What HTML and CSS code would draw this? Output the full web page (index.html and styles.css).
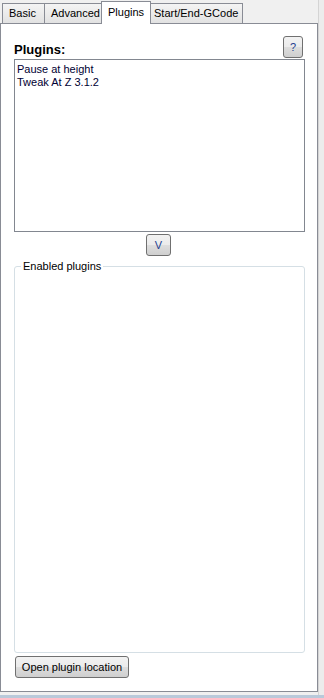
FILE: index.html
```html
<!DOCTYPE html>
<html lang="en">
  <head>
    <meta charset="UTF-8" />
    <meta name="viewport" content="width=device-width, initial-scale=1.0" />
    <title>Plugins</title>
    <link rel="stylesheet" href="styles.css">
  </head>
  <body>
    <div class="window">
      <div class="notebook">
        <div class="tabs">
          <span class="tab basic">Basic</span>
          <span class="tab advanced">Advanced</span>
          <span class="tab active">Plugins</span>
          <span class="tab gcode">Start/End-GCode</span>
        </div>
        <div class="panel">
          <div class="head">
            <span class="title">Plugins:</span>
            <button class="btn small">?</button>
          </div>
          <ul class="list">
            <li>Pause at height</li>
            <li>Tweak At Z 3.1.2</li>
          </ul>
          <div class="center">
            <button class="btn small down">V</button>
          </div>
          <fieldset class="group">
            <legend>Enabled plugins</legend>
          </fieldset>
          <div class="foot">
            <button class="btn open">Open plugin location</button>
          </div>
        </div>
      </div>
      <div class="side"></div>
    </div>
  </body>
</html>
```

FILE: styles.css
```css
* {
  margin: 0;
  padding: 0;
  box-sizing: border-box;
}

body {
  font-family: "Liberation Sans", Arial, sans-serif;
  font-size: 11px;
  color: #000;
  background-color: #f0f0f0;
  width: 324px;
  height: 698px;
  overflow: hidden;
}

.window {
  display: flex;
  height: 698px;
  border-bottom: 3px solid #b9c9da;
}

.notebook {
  width: 318px;
  display: flex;
  flex-direction: column;
}

.tabs {
  display: flex;
  align-items: flex-end;
  height: 23px;
  padding-left: 2px;
  background: #f0f0f0;
}

.tab {
  height: 20px;
  padding: 0 0 0 6px;
  line-height: 19px;
  white-space: nowrap;
  border: 1px solid #898c95;
  border-bottom: none;
  margin-right: -1px;
  background: linear-gradient(#f4f4f4, #e2e2e2);
  color: #000;
}

.tab.basic { width: 43px; }
.tab.advanced { width: 59px; }
.tab.gcode { width: 93px; padding-left: 3px; }

.tab.active {
  width: 50px;
  height: 23px;
  line-height: 20px;
  background: #fff;
  position: relative;
  z-index: 1;
  margin: 0 -1px -1px -1px;
  padding-left: 6px;
}

.panel {
  flex: 1;
  background: #fff;
  border: 1px solid #898c95;
  padding: 11px 12px 0 13px;
  display: flex;
  flex-direction: column;
  margin-bottom: 3px;
}

.head {
  display: flex;
  justify-content: space-between;
  align-items: center;
  height: 24px;
}

.title {
  font-weight: bold;
  font-size: 13px;
  padding-top: 4px;
}

.btn {
  font-family: inherit;
  font-size: 11px;
  height: 22px;
  padding: 0 7px;
  border: 1px solid #707070;
  border-radius: 3px;
  background: linear-gradient(#f2f2f2 0%, #ebebeb 50%, #dddddd 51%, #cfcfcf 100%);
  color: #000;
}

.btn.small {
  width: 20px;
  padding: 0;
  margin-right: 2px;
  color: #1e3f8f;
}

.btn.down {
  width: 25px;
}

.btn.open {
  width: 114px;
  padding: 0;
}

.list {
  list-style: none;
  height: 173px;
  border: 1px solid #828790;
  padding: 3px 2px;
  color: #000033;
  line-height: 13px;
}

.center {
  display: flex;
  justify-content: center;
  padding: 2px 0 4px;
}

.group {
  flex: 1;
  border: 1px solid #d5dfe5;
  border-radius: 3px;
  padding: 0 6px;
}

.group legend {
  margin-left: 0;
  padding: 0 2px;
  color: #000;
}

.foot {
  padding: 3px 0 13px 1px;
}

.side {
  flex: 1;
  background: #ececec;
  border-left: 1px solid #d4d4d4;
}
```
